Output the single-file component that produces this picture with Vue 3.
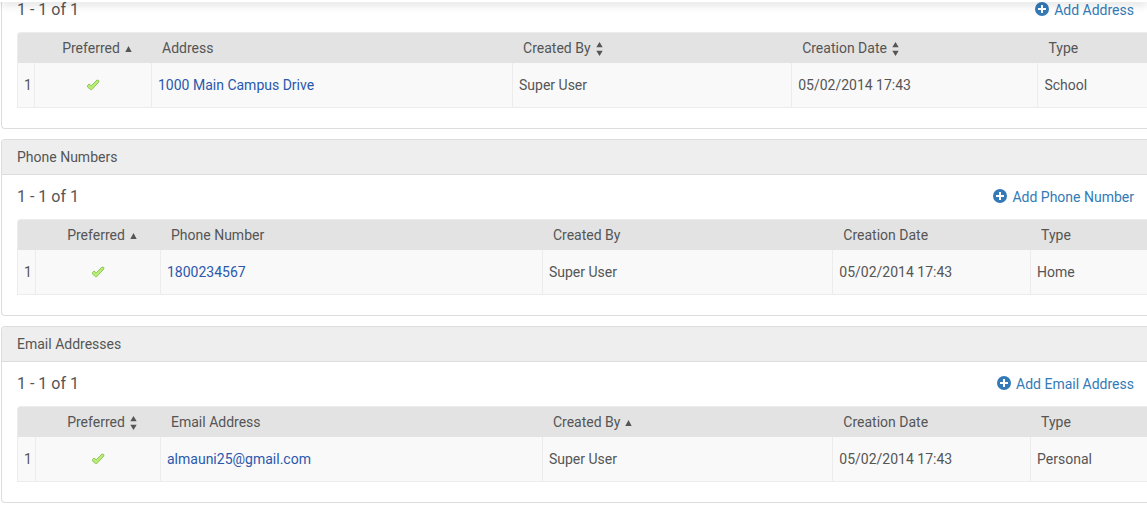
<script setup>
const sections = [
  {
    id: 'address',
    title: '',
    add: 'Add Address',
    columns: [
      { label: 'Preferred', sort: 'asc' },
      { label: 'Address' },
      { label: 'Created By', sort: 'both' },
      { label: 'Creation Date', sort: 'both' },
      { label: 'Type' },
    ],
    row: { value: '1000 Main Campus Drive', by: 'Super User', date: '05/02/2014 17:43', type: 'School' },
  },
  {
    id: 'phone',
    title: 'Phone Numbers',
    add: 'Add Phone Number',
    columns: [
      { label: 'Preferred', sort: 'asc' },
      { label: 'Phone Number' },
      { label: 'Created By' },
      { label: 'Creation Date' },
      { label: 'Type' },
    ],
    row: { value: '1800234567', by: 'Super User', date: '05/02/2014 17:43', type: 'Home' },
  },
  {
    id: 'email',
    title: 'Email Addresses',
    add: 'Add Email Address',
    columns: [
      { label: 'Preferred', sort: 'both' },
      { label: 'Email Address' },
      { label: 'Created By', sort: 'asc' },
      { label: 'Creation Date' },
      { label: 'Type' },
    ],
    row: { value: 'almauni25@gmail.com', by: 'Super User', date: '05/02/2014 17:43', type: 'Personal' },
  },
]
</script>

<template>
  <main class="page">
    <div class="top-bar"></div>
    <section v-for="s in sections" :key="s.id" class="panel" :class="s.id">
      <h2 v-if="s.title" class="heading">{{ s.title }}</h2>
      <div class="toolbar">
        <span class="count">1 - 1 of 1</span>
        <a class="add" href="#">
          <svg class="plus" width="14" height="14" viewBox="0 0 14 14" aria-hidden="true">
            <circle cx="7" cy="7" r="7" fill="#337ab7" />
            <path d="M6 3h2v3h3v2H8v3H6V8H3V6h3z" fill="#fff" />
          </svg>
          <span>{{ s.add }}</span>
        </a>
      </div>
      <table>
        <colgroup>
          <col class="c-num" />
          <col class="c-pref" />
          <col class="c-value" />
          <col class="c-by" />
          <col class="c-date" />
          <col />
        </colgroup>
        <thead>
          <tr>
            <th></th>
            <th v-for="(c, i) in s.columns" :key="c.label" scope="col" :class="{ centre: i === 0 }">
              <button v-if="c.sort" type="button" class="sort">
                <span>{{ c.label }}</span>
                <svg width="7" height="16" viewBox="0 0 7 16" aria-hidden="true">
                  <path v-if="c.sort === 'asc'" d="M3.5 6 L6.7 12 H.3z" fill="#555" />
                  <path v-else d="M3.5 2 L6.7 7.3 H.3z M.3 10.7 H6.7 L3.5 16z" fill="#555" />
                </svg>
              </button>
              <template v-else>{{ c.label }}</template>
            </th>
          </tr>
        </thead>
        <tbody>
          <tr>
            <td>1</td>
            <td class="centre">
              <svg class="tick" width="14" height="12" viewBox="0 0 14 12" role="img" aria-label="Preferred">
                <path d="M1.5 6.5 L3 5 L5.2 6.8 L11 1 L12.8 1.5 L12.8 3 L5.8 10.6 L4.5 10.6 L1.5 8z" fill="#b6ee72" stroke="#93c45a" stroke-width="1" />
              </svg>
            </td>
            <td><a class="value" href="#">{{ s.row.value }}</a></td>
            <td>{{ s.row.by }}</td>
            <td>{{ s.row.date }}</td>
            <td>{{ s.row.type }}</td>
          </tr>
        </tbody>
      </table>
    </section>
  </main>
</template>

<style>
body {
  margin: 0;
  background: #fff;
}
</style>

<style scoped>
.page {
  position: relative;
  padding-left: 1px;
  font: 14px/20px Roboto, sans-serif;
  color: #555;
}
.top-bar {
  position: absolute;
  top: 0;
  left: 0;
  right: 0;
  height: 2px;
  background: #fff;
  box-shadow: 0 1px 8px rgba(0, 0, 0, 0.4);
}
.panel {
  box-sizing: border-box;
  border: 1px solid #ddd;
  border-right: 0;
  border-radius: 4px 0 0 4px;
  padding: 0 0 20px 15px;
  margin-bottom: 10px;
}
.panel.address {
  border-top: 0;
  border-top-left-radius: 0;
}
.heading {
  margin: 0 0 0 -15px;
  padding: 7px 15px;
  font-size: 14px;
  font-weight: 400;
  line-height: 20px;
  background: #eee;
  border-bottom: 1px solid #ddd;
  border-top-left-radius: 3px;
}
.toolbar {
  display: flex;
  justify-content: space-between;
  align-items: center;
  padding: 12px 13px 12px 0;
}
.address .toolbar {
  padding-top: 0;
}
.count {
  font-size: 16px;
}
.add {
  display: flex;
  align-items: center;
  gap: 5px;
  color: #337ab7;
  text-decoration: none;
}
.plus {
  margin-bottom: 2px;
}
table {
  width: 100%;
  table-layout: fixed;
  border-collapse: separate;
  border-spacing: 0;
}
.c-num {
  width: 18px;
}
.c-pref {
  width: 125px;
}
.c-value {
  width: 33.8%;
}
.c-by {
  width: 25.7%;
}
.c-date {
  width: 17.5%;
}
.address .c-num {
  width: 17px;
}
.address .c-pref {
  width: 117px;
}
.address .c-value {
  width: 31.95%;
}
.address .c-by {
  width: 24.7%;
}
.address .c-date {
  width: 21.8%;
}
th {
  padding: 5px 0 5px 10px;
  text-align: left;
  font-weight: 400;
  background: #e3e3e3;
  border-top: 1px solid #ececec;
  border-left: 1px solid #e3e3e3;
  white-space: nowrap;
}
th:first-child {
  padding: 0;
  border-left-color: #ececec;
  border-top-left-radius: 4px;
}
td {
  padding: 12px 0 12px 6px;
  background: #f9f9f9;
  border-left: 1px solid #ececec;
  border-bottom: 1px solid #ececec;
}
.centre {
  text-align: center;
}
th.centre {
  padding-left: 8px;
}
td.centre {
  padding-left: 0;
}
.tick {
  display: block;
  margin: 0 auto;
}
.sort {
  display: inline-flex;
  align-items: center;
  gap: 5px;
  padding: 0;
  border: 0;
  background: none;
  font: inherit;
  color: inherit;
  vertical-align: top;
}
.value {
  color: #2a58ac;
  text-decoration: none;
}
</style>
